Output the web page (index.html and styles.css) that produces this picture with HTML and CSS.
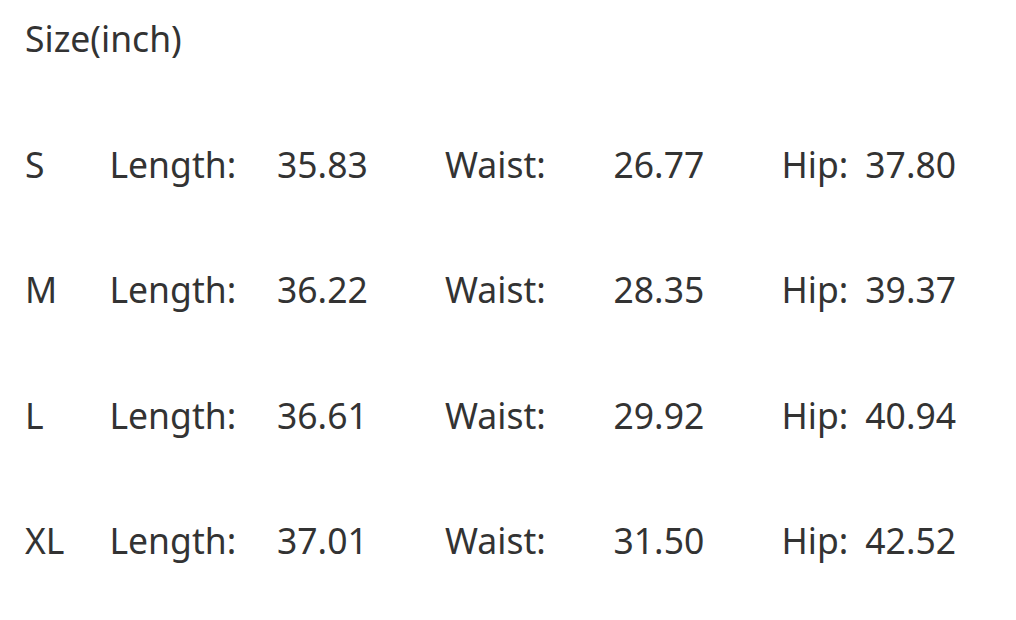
FILE: index.html
```html
<!DOCTYPE html>
<html>
<head>
<meta charset="utf-8">
<link rel="stylesheet" href="styles.css">
</head>
<body>
<div class="sheet">
  <div class="title">Size(inch)</div>
  <div class="table">
    <div class="row"><span class="size">S</span><span class="cell">Length:</span><span class="cell">35.83</span><span class="cell">Waist:</span><span class="cell">26.77</span><span class="hip"><span>Hip:</span><span>37.80</span></span></div>
    <div class="row"><span class="size">M</span><span class="cell">Length:</span><span class="cell">36.22</span><span class="cell">Waist:</span><span class="cell">28.35</span><span class="hip"><span>Hip:</span><span>39.37</span></span></div>
    <div class="row"><span class="size">L</span><span class="cell">Length:</span><span class="cell">36.61</span><span class="cell">Waist:</span><span class="cell">29.92</span><span class="hip"><span>Hip:</span><span>40.94</span></span></div>
    <div class="row"><span class="size">XL</span><span class="cell">Length:</span><span class="cell">37.01</span><span class="cell">Waist:</span><span class="cell">31.50</span><span class="hip"><span>Hip:</span><span>42.52</span></span></div>
  </div>
</div>
</body>
</html>
```
FILE: styles.css
```css
html, body {
  margin: 0;
  padding: 0;
  background: #ffffff;
}
.sheet {
  font-family: "Noto Sans", "Open Sans", sans-serif;
  font-size: 35.5px;
  color: #333333;
  padding: 13px 0 0 25px;
  line-height: 50px;
}
.title {
  height: 50px;
}
.table {
  display: flex;
  flex-direction: column;
  gap: 75.5px;
  margin-top: 75.5px;
}
.row {
  display: grid;
  grid-template-columns: 84.5px 167.5px 168px 168.5px 168px auto;
  height: 50px;
}
.hip {
  display: flex;
  gap: 17px;
}
```
